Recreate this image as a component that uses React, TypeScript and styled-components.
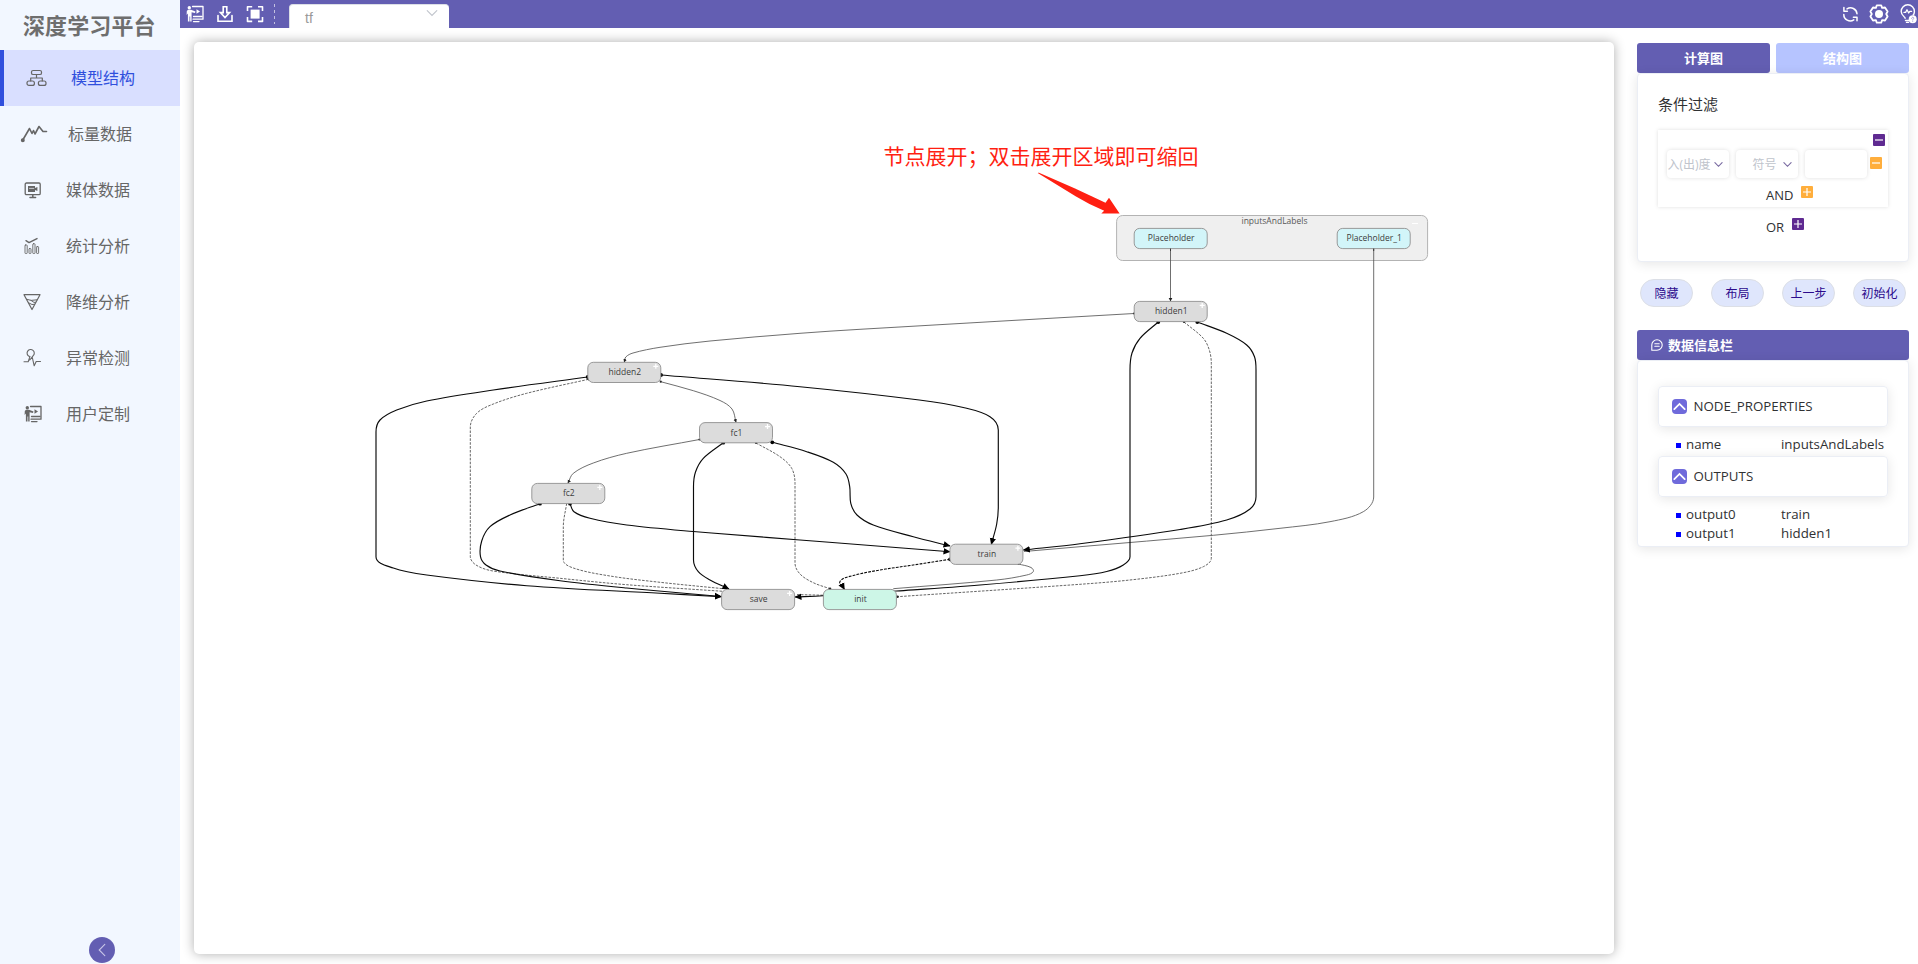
import React from 'react';
import styled, { createGlobalStyle } from 'styled-components';

const GlobalStyle = createGlobalStyle`
  * { box-sizing: border-box; }
  body {
    margin: 0;
    background: #fff;
    font-family: "Open Sans", "Noto Sans CJK SC", sans-serif;
    color: #303133;
    overflow: hidden;
  }
`;

const Shell = styled.div`
  display: flex;
  width: 100vw;
  height: 100vh;
  overflow: hidden;
`;

const Sidebar = styled.aside`
  display: flex;
  flex-direction: column;
  flex: 0 0 180px;
  background: #f2f7ff;
`;

const Brand = styled.div`
  height: 50px;
  padding-left: 23px;
  font: 700 22px/48px "Noto Sans CJK SC", sans-serif;
  letter-spacing: 0.1px;
  color: #6e6e6e;
  white-space: nowrap;
`;

const NavItem = styled.a<{ $active?: boolean; $indent: number }>`
  display: flex;
  align-items: center;
  gap: 24px;
  height: 56px;
  padding-left: ${(p) => p.$indent - 4}px;
  border-left: 4px solid ${(p) => (p.$active ? '#304fdd' : 'transparent')};
  background: ${(p) => (p.$active ? '#d9dfff' : 'transparent')};
  color: ${(p) => (p.$active ? '#304fdd' : '#666')};
  font-size: 16px;
  line-height: 24px;
`;

const IconSlot = styled.span<{ $w: number }>`
  display: flex;
  flex: 0 0 ${(p) => p.$w}px;
  min-width: 0;
  color: #666;
  svg { display: block; overflow: visible; flex: none; }
`;

const CollapseButton = styled.button`
  display: flex;
  align-items: center;
  justify-content: center;
  width: 26px;
  height: 26px;
  margin: auto 0 1.5px 89px;
  padding: 0;
  border: 0;
  border-radius: 50%;
  background: #635eb2;
  flex: none;
`;

const Main = styled.main`
  display: flex;
  flex-direction: column;
  flex: 1;
  min-width: 0;
`;

const TopBar = styled.header`
  display: flex;
  align-items: stretch;
  height: 28px;
  flex: none;
  background: #635eb2;
  color: #fff;
`;

const Tools = styled.div`
  display: flex;
  align-items: center;
  gap: 12px;
  padding: 0 10px 0 6px;
  svg { display: block; flex: none; }
`;

const ToolDivider = styled.div`
  width: 1px;
  height: 20px;
  margin-top: 4px;
  background: repeating-linear-gradient(#c3c1e0 0 3px, transparent 3px 6px);
`;

const RunTab = styled.div`
  display: flex;
  align-items: flex-start;
  justify-content: space-between;
  width: 160px;
  margin: 4px auto 0 14px;
  padding: 4px 11px 0 15px;
  border: 1px solid #dcdfe6;
  border-width: 1px 0 0 1px;
  border-radius: 4px 4px 0 0;
  background: #fff;
  color: #999;
  font: 14px/18px "Liberation Sans", sans-serif;
  svg { margin-top: -2px; }
`;

const StatusTools = styled.div`
  display: flex;
  align-items: center;
  gap: 11px;
  svg { display: block; flex: none; }
  svg:first-child { margin-right: -1px; }
`;

const Workspace = styled.div`
  display: flex;
  flex: 1;
  min-height: 0;
  padding: 14px 9px 10px 14px;
`;

const Board = styled.section`
  flex: 0 0 1420px;
  margin-right: 23px;
  border-radius: 5px;
  background: #fff;
  box-shadow: 0 0 12px rgba(0, 0, 0, 0.32);
  svg { display: block; }
`;

const Panel = styled.aside`
  display: flex;
  flex-direction: column;
  flex: 1;
  padding-top: 1px;
`;

const Tabs = styled.div`
  display: flex;
  gap: 6px;
`;

const TabButton = styled.button<{ $on?: boolean }>`
  flex: 1;
  height: 30px;
  padding: 0;
  border: 0;
  border-radius: 3px;
  background: ${(p) => (p.$on ? '#635eb2' : '#b6c4ff')};
  color: #fff;
  font: 700 13px/28px "Noto Sans CJK SC", sans-serif;
`;

const Card = styled.div<{ $h: number; $top: number }>`
  height: ${(p) => p.$h}px;
  padding: ${(p) => p.$top}px 20px 0;
  border: 1px solid #ebeef5;
  border-radius: 4px;
  background: #fff;
  box-shadow: 0 2px 12px rgba(0, 0, 0, 0.1);
`;

const FilterTitle = styled.h2`
  margin: 0 0 14px;
  font-size: 15px;
  font-weight: 400;
  line-height: 24px;
`;

const FilterGroup = styled.div`
  height: 77px;
  box-shadow: 0 0 4px rgba(0, 0, 0, 0.13);
`;

const GroupHead = styled.div`
  display: flex;
  justify-content: flex-end;
  height: 20px;
  padding: 3.5px 3.5px 0 0;
`;

const Condition = styled.div`
  display: flex;
  gap: 7px;
  padding-left: 8.5px;
`;

const Field = styled.div<{ $pad: number }>`
  display: flex;
  align-items: center;
  justify-content: space-between;
  width: 62px;
  height: 28px;
  padding: 0 6px 0 ${(p) => p.$pad}px;
  border-radius: 4px;
  box-shadow: 0 0 4px rgba(0, 0, 0, 0.13);
  color: #c0c4cc;
  font-size: 12px;
  white-space: nowrap;
  svg { flex: none; }
`;

const Square = styled.span<{ $c: string }>`
  display: flex;
  align-items: center;
  justify-content: center;
  width: 12px;
  height: 12px;
  border-radius: 1px;
  background: ${(p) => p.$c};
  flex: none;
`;

const RemoveSlot = styled.div`
  padding-top: 6.5px;
  margin-left: -4px;
`;

const Joiner = styled.div<{ $mt: number }>`
  display: flex;
  align-items: flex-start;
  gap: 8px;
  margin-top: ${(p) => p.$mt}px;
  padding-left: 108px;
  font-size: 13px;
  line-height: 18px;
`;

const Actions = styled.div`
  display: flex;
  gap: 18px;
  padding: 17px 0 23px 3px;
`;

const Pill = styled.button`
  width: 53px;
  height: 28px;
  padding: 0;
  border: 1px solid #dcdfe6;
  border-radius: 14px;
  background: #dfe6fc;
  color: #2b0a8c;
  font: 12px/24px "Noto Sans CJK SC", sans-serif;
  white-space: nowrap;
`;

const InfoHeader = styled.div`
  display: flex;
  align-items: center;
  gap: 5px;
  height: 30px;
  flex: none;
  padding-left: 14px;
  border-radius: 3px;
  background: #635eb2;
  color: #fff;
  font: 700 13px/30px "Noto Sans CJK SC", sans-serif;
`;

const Section = styled.div`
  display: flex;
  align-items: center;
  gap: 7px;
  height: 41px;
  padding: 0 0 2px 12.5px;
  border: 1px solid #ebeef5;
  border-radius: 4px;
  box-shadow: 0 2px 12px rgba(0, 0, 0, 0.1);
  font-size: 13.3px;
`;

const SectionIcon = styled.span`
  display: flex;
  align-items: center;
  justify-content: center;
  width: 15px;
  height: 15px;
  margin-top: 1px;
  border-radius: 4px;
  background: #6f6adb;
`;

const PropertyList = styled.div`
  padding: 7px 0 3px 18px;
`;

const Property = styled.div`
  display: grid;
  grid-template-columns: 10px 95px auto;
  align-items: center;
  height: 19px;
  font-size: 13.3px;
  white-space: nowrap;
  &::before {
    content: '';
    width: 5px;
    height: 5px;
    margin-top: 3px;
    background: #00f;
  }
`;

const NodeLabel = styled.text`
  font: 8.5px "Open Sans", "Noto Sans", sans-serif;
  fill: #3c3c3c;
  text-anchor: middle;
`;

const Note = styled.text`
  font: 21px "Noto Sans CJK SC", sans-serif;
  fill: #ff1f12;
`;

const stroke = { fill: 'none', stroke: 'currentColor', strokeLinecap: 'round' as const, strokeLinejoin: 'round' as const };

const TreeIcon = () => (
  <svg width="21" height="18" viewBox="0 0 21 18" {...stroke} strokeWidth="1.2">
    <rect x="5.5" y="1.5" width="10" height="4" rx="1.6" />
    <path d="M10.5 5.5V9M4.7 12V9H16.3V12" />
    <rect x="1" y="12" width="7.4" height="4.4" rx="2" />
    <rect x="12.4" y="12" width="7.6" height="4.4" rx="2" />
  </svg>
);

const LineIcon = () => (
  <svg width="26" height="18" viewBox="0 0 26 18" {...stroke} strokeWidth="1.6">
    <path d="M1.5 15.5 8.5 3.5 11 8.5 12.5 5.5 14 9 18 1.5 22 6.5H25.5" />
    <circle cx="1.8" cy="15.3" r="1.2" fill="currentColor" />
  </svg>
);

const MediaIcon = () => (
  <svg width="18" height="18" viewBox="0 0 18 18" {...stroke}>
    <rect x="1.2" y="2" width="15" height="11.6" rx="1.2" strokeWidth="1.3" />
    <path d="M4 5H11V7L13.4 6V10L11 9V11H4Z" fill="currentColor" stroke="none" />
    <path d="M5.5 7.4H9.8" stroke="#f2f7ff" strokeWidth="0.7" />
    <path d="M6 16.4H11.6M8.8 14V16" strokeWidth="1.5" />
  </svg>
);

const StatsIcon = () => (
  <svg width="18" height="18" viewBox="0 0 18 18" {...stroke} strokeWidth="0.9">
    <path d="M2 3.7 5 5.6 13 1.6" strokeWidth="1.4" />
    <rect x="1" y="8" width="2.2" height="8.5" rx="0.6" />
    <rect x="5" y="11.5" width="2" height="5" rx="0.6" />
    <rect x="8.8" y="6.7" width="2.2" height="9.8" rx="0.6" />
    <rect x="12.6" y="9.6" width="2" height="6.9" rx="0.6" />
  </svg>
);

const FunnelIcon = () => (
  <svg width="18" height="18" viewBox="0 0 18 18" {...stroke} strokeWidth="1">
    <path d="M0 1.7H16L8 16.5Z" strokeWidth="1.2" />
    <path d="M2.6 6.2 7 7.4 13 6.8M4.6 9.8 8 11.5 10.6 11.3M7 7.4 10 9.4 11.5 9.3" />
  </svg>
);

const PulseIcon = () => (
  <svg width="18" height="18" viewBox="0 0 18 18" {...stroke} strokeWidth="1.1">
    <path d="M0 12.7H4.2L6 7.4M5 7.3A3.6 3.6 0 1 1 9.2 6.7L5.8 11M8.2 8 10.2 16.8 12.2 12.5H16.5" />
  </svg>
);

const PresenterIcon = () => (
  <svg width="18" height="18" viewBox="0 0 18 18" {...stroke} strokeWidth="1.3">
    <path d="M6.5 1.5H17V14.2H7" />
    <circle cx="3.3" cy="2.8" r="1.7" fill="currentColor" stroke="none" />
    <path d="M0.8 6 2 4.8H5L9.5 6.5 9 8 5.6 7.2V16.5H4.2V11.5H3.5V16.5H1.9V8.5L0.6 10Z" fill="currentColor" stroke="none" />
    <path d="M10.5 4.3 14 6.6 10.5 8.8Z" fill="currentColor" stroke="none" />
    <path d="M7.5 11.5H16M7.5 16.6H13" />
  </svg>
);

const DownloadIcon = () => (
  <svg width="18" height="18" viewBox="0 0 18 18" {...stroke} strokeLinejoin="miter" strokeWidth="1.6">
    <path d="M7.2 1.8H10.8V7.6H13.6L9 12.6 4.4 7.6H7.2ZM2 10.5V16.3H16V10.5" />
  </svg>
);

const FitIcon = () => (
  <svg width="18" height="18" viewBox="0 0 18 18" {...stroke} strokeLinecap="butt" strokeWidth="1.6">
    <path d="M1.5 6V1.7H6.2M12 1.7H16.5V6M16.5 12V16.4H12M6.2 16.4H1.5V12" />
    <rect x="4.6" y="4.6" width="9" height="9" fill="currentColor" stroke="none" />
  </svg>
);

const RefreshIcon = () => (
  <svg width="17" height="18" viewBox="0 0 17 18" {...stroke} strokeWidth="1.5">
    <path d="M5 3.9A6.5 6.5 0 0 1 15 8.8M1.8 9.4A6.5 6.5 0 0 0 11.8 14.9M1.9 2.6V6.2H5.4M15 15.8V12.2H11.4" />
  </svg>
);

const GearIcon = () => (
  <svg width="20" height="20" viewBox="0 0 20 20" {...stroke} strokeWidth="1.8">
    <path d="M7.8 1.3H12.2L13.1 3.9 16 3.5 18.6 7.5 17.2 10 18.6 12.5 16 16.5 13.1 16.1 12.2 18.7H7.8L6.9 16.1 4 16.5 1.4 12.5 2.8 10 1.4 7.5 4 3.5 6.9 3.9Z" />
    <circle cx="10" cy="10" r="4" fill="currentColor" stroke="none" />
  </svg>
);

const BulbIcon = () => (
  <svg width="18" height="20" viewBox="0 0 18 20" {...stroke} strokeWidth="1.4">
    <path d="M5.2 14.2C4.8 12.8 1.2 11.2 1.2 7.4A6.6 6.6 0 0 1 14.4 7.4C14.4 9 13.9 10 13.2 11M5.5 16.5H8.5M6.5 18.4H8.5" />
    <path d="M4 8.4H5.6L7 5.8 8.7 9 9.8 7.4H11.6" strokeWidth="1.3" />
    <circle cx="12.7" cy="15.2" r="4" fill="currentColor" stroke="none" />
    <path d="M11.6 14.4C11.6 12.7 14 13 13.7 14.4 13.5 15.1 12.7 15.1 12.7 16M12.7 17.3V17.4" stroke="#8f8bd0" strokeWidth="0.8" />
  </svg>
);

const ChatIcon = () => (
  <svg width="12" height="12" viewBox="0 0 12 12" {...stroke} strokeWidth="1.1">
    <path d="M0.8 11.2V6A5.2 5.2 0 1 1 6 11.2ZM3.8 4.7H8.2M3.8 7.2H8.2" />
  </svg>
);

const Chevron = ({ color, w = 9, dir = 'down', sw = 1.1 }: { color: string; w?: number; dir?: 'down' | 'up' | 'left'; sw?: number }) => {
  const d = { down: 'M1 3 5 7 9 3', up: 'M1 7 5 3 9 7', left: 'M7 1 3 5 7 9' }[dir];
  return (
    <svg width={w} height={w} viewBox="0 0 10 10" fill="none" stroke={color} strokeWidth={(sw * 10) / w} strokeLinecap="round">
      <path d={d} />
    </svg>
  );
};

const Sign = ({ plus }: { plus?: boolean }) => (
  <svg width="10" height="10" viewBox="0 0 10 10" stroke="#fff" strokeWidth="1.2">
    <path d={plus ? 'M1 5H9M5 1V9' : 'M1 5H9'} />
  </svg>
);

const navItems = [
  { label: '模型结构', icon: <TreeIcon />, indent: 26, width: 21, active: true },
  { label: '标量数据', icon: <LineIcon />, indent: 21, width: 23 },
  { label: '媒体数据', icon: <MediaIcon />, indent: 24, width: 18 },
  { label: '统计分析', icon: <StatsIcon />, indent: 24, width: 18 },
  { label: '降维分析', icon: <FunnelIcon />, indent: 24, width: 18 },
  { label: '异常检测', icon: <PulseIcon />, indent: 24, width: 18 },
  { label: '用户定制', icon: <PresenterIcon />, indent: 24, width: 18 },
];

type Point = [number, number];
type Kind = 'thin' | 'bold' | 'dash' | 'boldDash';

const edges: { kind: Kind; start: string; end?: string; points: Point[] }[] = [
  { kind: 'thin', start: '', end: 'tip', points: [[1170.5, 248.5], [1170.5, 301]] },
  { kind: 'thin', start: 'dot', end: 'tip', points: [[1134, 313.5], [860, 329.3], [800, 333.3], [710, 341], [660, 347.3], [633, 353], [625.8, 357], [624.3, 362]] },
  { kind: 'thin', start: 'dot', end: 'tip', points: [[660.7, 381.7], [693.3, 390.7], [720, 400.5], [732, 409], [736, 422]] },
  { kind: 'thin', start: 'dot', end: 'tip', points: [[699.5, 439.5], [626.7, 453.3], [593.3, 463], [573.3, 473.3], [568, 483]] },
  { kind: 'thin', start: '', points: [[1373.7, 248.5], [1373.7, 497], [1363.3, 511.7], [1330, 521.7], [1280, 528.3], [1213.3, 535.3], [1080, 546.7], [1024, 551.5]] },
  { kind: 'thin', start: 'dot', points: [[1018.3, 564], [1031, 567.5], [1033.3, 571.5], [1026.7, 575], [996.7, 580], [893.3, 588.7]] },
  { kind: 'dash', start: 'dot', points: [[588.5, 379.3], [526.7, 393.3], [493.3, 404], [476.7, 413.3], [470.3, 427], [470.3, 556.7], [476, 565], [493, 571], [560, 578.3], [626.7, 584.7], [723, 591.3]] },
  { kind: 'dash', start: '', points: [[566.7, 503.3], [563.3, 526.7], [563.3, 560], [573.3, 568], [610, 576], [660, 582.3], [723.3, 588.7]] },
  { kind: 'dash', start: 'dot', end: 'dotEnd', points: [[756, 443], [780, 456.7], [791.7, 468.3], [795, 483.3], [795, 563.3], [800, 574], [813.3, 582.7], [830, 588.7]] },
  { kind: 'dash', start: 'dot', end: 'dotEnd', points: [[1184, 322], [1203.3, 338.3], [1209.3, 350], [1211.3, 363.3], [1211.3, 558.3], [1203.3, 566.7], [1180, 573.3], [1130, 580], [1080, 584.3], [897.5, 596.7]] },
  { kind: 'dash', start: '', points: [[797, 594.6], [823, 595.2]] },
  { kind: 'bold', start: 'bigDot', end: 'arrow', points: [[587.7, 377], [493.3, 390], [426.7, 401], [396.7, 410], [380, 420], [376, 432], [376, 556.7], [393.3, 568], [426.7, 575], [526.7, 585.7], [660, 593.3], [721.3, 596.7]] },
  { kind: 'bold', start: 'bigDot', end: 'arrow', points: [[540, 503.7], [510, 515], [490, 526.7], [481.7, 541], [480.5, 556.7], [486, 565], [500, 571], [560, 580.7], [626.7, 588], [721.3, 596.5]] },
  { kind: 'bold', start: 'bigDot', end: 'arrow', points: [[570, 503.7], [574, 511.7], [590, 518.3], [626.7, 525], [693.3, 531.5], [800, 540], [950, 551.7]] },
  { kind: 'bold', start: 'bigDot', end: 'arrow', points: [[723.3, 442.7], [703.3, 458.3], [695.5, 472], [693.5, 486.7], [693.5, 560], [698.3, 571.7], [710, 580], [729, 589]] },
  { kind: 'bold', start: 'bigDot', end: 'arrow', points: [[772.3, 442.3], [806.7, 451.7], [833.3, 462.3], [846, 474], [849.7, 486.7], [850.8, 503.3], [857, 515], [873.3, 525], [913.3, 536.7], [950, 546]] },
  { kind: 'bold', start: 'bigDot', end: 'arrow', points: [[661, 375], [800, 386.7], [919.3, 400], [963.3, 407.5], [990, 416.7], [998.3, 430], [998.3, 506.7], [996.7, 524], [991.3, 544.5]] },
  { kind: 'bold', start: 'bigDot', end: 'arrow', points: [[1158.3, 322], [1140, 338.3], [1132, 353], [1130, 370], [1130, 556.7], [1123.3, 565], [1106.7, 571.5], [1080, 575.7], [980, 585], [896.7, 591], [823, 595.8], [795, 597]] },
  { kind: 'bold', start: 'bigDot', end: 'arrow', points: [[1197.3, 322], [1226.7, 333.3], [1246.7, 345], [1254.5, 356.7], [1256, 370], [1256, 496.7], [1250, 509], [1226.7, 520], [1180, 529.5], [1080, 543.7], [1023.3, 550]] },
  { kind: 'boldDash', start: 'bigDot', end: 'arrow', points: [[950, 559.3], [913.3, 565], [880, 570], [853.3, 575.5], [840, 581.5], [844.5, 589.5]] },
];

const lineStyles: Record<Kind, { stroke: string; strokeWidth: number; strokeDasharray?: string }> = {
  thin: { stroke: '#555', strokeWidth: 0.85 },
  bold: { stroke: '#0a0a0a', strokeWidth: 1.15 },
  dash: { stroke: '#666', strokeWidth: 1, strokeDasharray: '2.6 1.3' },
  boldDash: { stroke: '#0a0a0a', strokeWidth: 1.1, strokeDasharray: '2.8 1.2' },
};

/* Cubic spline through the points. Where a vertical run meets a bend the tangent is exactly vertical, so the run stays straight. */
function spline(points: Point[]): string {
  const tangent = points.map((p, i) => {
    const a = points[Math.max(0, i - 1)];
    const b = points[Math.min(points.length - 1, i + 1)];
    if (a[0] === p[0] || b[0] === p[0]) {
      if (i > 0 && i < points.length - 1) return [0, Math.sign(b[1] - a[1])];
    }
    const len = Math.hypot(b[0] - a[0], b[1] - a[1]) || 1;
    return [(b[0] - a[0]) / len, (b[1] - a[1]) / len];
  });
  return points.reduce((d, p, i) => {
    if (i === 0) return `M${p[0]} ${p[1]}`;
    const q = points[i - 1];
    const k = Math.hypot(p[0] - q[0], p[1] - q[1]) / 3;
    const [t0, t1] = [tangent[i - 1], tangent[i]];
    return `${d}C${q[0] + t0[0] * k} ${q[1] + t0[1] * k} ${p[0] - t1[0] * k} ${p[1] - t1[1] * k} ${p[0]} ${p[1]}`;
  }, '');
}

const nodes = [
  { label: 'Placeholder', x: 1134.2, y: 228.4, fill: '#d2f5f9' },
  { label: 'Placeholder_1', x: 1337.2, y: 228.4, fill: '#d2f5f9' },
  { label: 'hidden1', x: 1134.2, y: 301.4, fill: '#dcdcdc', expandable: true },
  { label: 'hidden2', x: 587.8, y: 362.3, fill: '#dcdcdc', expandable: true },
  { label: 'fc1', x: 699.5, y: 422.6, fill: '#dcdcdc', expandable: true },
  { label: 'fc2', x: 531.8, y: 483.4, fill: '#dcdcdc', expandable: true },
  { label: 'train', x: 949.9, y: 544.2, fill: '#dcdcdc', expandable: true },
  { label: 'save', x: 721.6, y: 589.4, fill: '#dcdcdc', expandable: true },
  { label: 'init', x: 823.4, y: 589.4, fill: '#cdf6e7' },
];

const Graph = () => (
  <svg width="1420" height="912" viewBox="194 42 1420 912">
    <defs>
      <marker id="arrow" markerUnits="userSpaceOnUse" markerWidth="8" markerHeight="8" refX="6.5" refY="3.5" orient="auto">
        <path d="M0 0.3 7 3.5 0 6.7Z" fill="#000" />
      </marker>
      <marker id="tip" markerUnits="userSpaceOnUse" markerWidth="5" markerHeight="5" refX="3" refY="2" orient="auto">
        <path d="M0 0.2 3.4 2 0 3.8Z" fill="#222" />
      </marker>
      <marker id="dot" markerUnits="userSpaceOnUse" markerWidth="4" markerHeight="4" refX="2" refY="2">
        <circle cx="2" cy="2" r="1.1" fill="#222" />
      </marker>
      <marker id="dotEnd" markerUnits="userSpaceOnUse" markerWidth="4" markerHeight="4" refX="2" refY="2">
        <circle cx="2" cy="2" r="1.3" fill="#222" />
      </marker>
      <marker id="bigDot" markerUnits="userSpaceOnUse" markerWidth="6" markerHeight="6" refX="3" refY="3">
        <circle cx="3" cy="3" r="1.9" fill="#000" />
      </marker>
    </defs>
    <rect x="1116.6" y="215.5" width="311" height="45" rx="6" fill="#efefef" stroke="#b3b3b3" />
    <NodeLabel x="1274.5" y="224.2" opacity="0.85">inputsAndLabels</NodeLabel>
    <path d="M1412 223.5H1418" stroke="#fff" />
    {edges.map((e, i) => (
      <path
        key={i}
        d={spline(e.points)}
        fill="none"
        {...lineStyles[e.kind]}
        markerStart={e.start ? `url(#${e.start})` : undefined}
        markerEnd={e.end ? `url(#${e.end})` : undefined}
      />
    ))}
    {nodes.map((n) => (
      <g key={n.label}>
        <rect x={n.x} y={n.y} width="73" height="20.2" rx="5.5" fill={n.fill} stroke="#8f8f8f" strokeWidth="0.9" />
        <NodeLabel x={n.x + 37} y={n.y + 13}>{n.label}</NodeLabel>
        {n.expandable && <path d={`M${n.x + 65.5} ${n.y + 4}h5m-2.5 -2.5v5`} stroke="#fff" strokeWidth="1.3" />}
      </g>
    ))}
    <path d="M1170.5 248.6V251M1373.7 248.6V251" stroke="#333" />
    <Note x="883.5" y="164.3">节点展开；双击展开区域即可缩回</Note>
    <path d="M1037.7 173Q1038 172.4 1039 172.8L1074.5 188.3 1105.5 202.8 1109 197.8 1119.6 213.6H1101.3L1104.2 210.8Q1090 205 1076 196.5Z" fill="#ff1f12" />
  </svg>
);

export default function App() {
  return (
    <Shell>
      <GlobalStyle />
      <Sidebar>
        <Brand>深度学习平台</Brand>
        {navItems.map((item) => (
          <NavItem key={item.label} $active={item.active} $indent={item.indent}>
            <IconSlot $w={item.width}>{item.icon}</IconSlot>
            {item.label}
          </NavItem>
        ))}
        <CollapseButton>
          <Chevron color="#c9c7e8" w={14} dir="left" />
        </CollapseButton>
      </Sidebar>
      <Main>
        <TopBar>
          <Tools>
            <PresenterIcon />
            <DownloadIcon />
            <FitIcon />
          </Tools>
          <ToolDivider />
          <RunTab>
            <span>tf</span>
            <Chevron color="#c0c4cc" w={12} />
          </RunTab>
          <StatusTools>
            <RefreshIcon />
            <GearIcon />
            <BulbIcon />
          </StatusTools>
        </TopBar>
        <Workspace>
          <Board>
            <Graph />
          </Board>
          <Panel>
            <Tabs>
              <TabButton $on>计算图</TabButton>
              <TabButton>结构图</TabButton>
            </Tabs>
            <Card $h={189} $top={18}>
              <FilterTitle>条件过滤</FilterTitle>
              <FilterGroup>
                <GroupHead>
                  <Square $c="#5f2a91"><Sign /></Square>
                </GroupHead>
                <Condition>
                  <Field $pad={1}>入(出)度<Chevron color="#76679f" /></Field>
                  <Field $pad={17}>符号<Chevron color="#76679f" /></Field>
                  <Field $pad={0} />
                  <RemoveSlot>
                    <Square $c="#ffae3c"><Sign /></Square>
                  </RemoveSlot>
                </Condition>
                <Joiner $mt={7.5}>
                  AND
                  <Square $c="#ffae3c"><Sign plus /></Square>
                </Joiner>
              </FilterGroup>
              <Joiner $mt={10.5}>
                OR
                <Square $c="#5f2a91"><Sign plus /></Square>
              </Joiner>
            </Card>
            <Actions>
              <Pill>隐藏</Pill>
              <Pill>布局</Pill>
              <Pill>上一步</Pill>
              <Pill>初始化</Pill>
            </Actions>
            <InfoHeader>
              <ChatIcon />
              数据信息栏
            </InfoHeader>
            <Card $h={187} $top={25}>
              <Section>
                <SectionIcon><Chevron color="#fff" w={13} dir="up" sw={1.8} /></SectionIcon>
                NODE_PROPERTIES
              </Section>
              <PropertyList>
                <Property><span>name</span><span>inputsAndLabels</span></Property>
              </PropertyList>
              <Section>
                <SectionIcon><Chevron color="#fff" w={13} dir="up" sw={1.8} /></SectionIcon>
                OUTPUTS
              </Section>
              <PropertyList>
                <Property><span>output0</span><span>train</span></Property>
                <Property><span>output1</span><span>hidden1</span></Property>
              </PropertyList>
            </Card>
          </Panel>
        </Workspace>
      </Main>
    </Shell>
  );
}
